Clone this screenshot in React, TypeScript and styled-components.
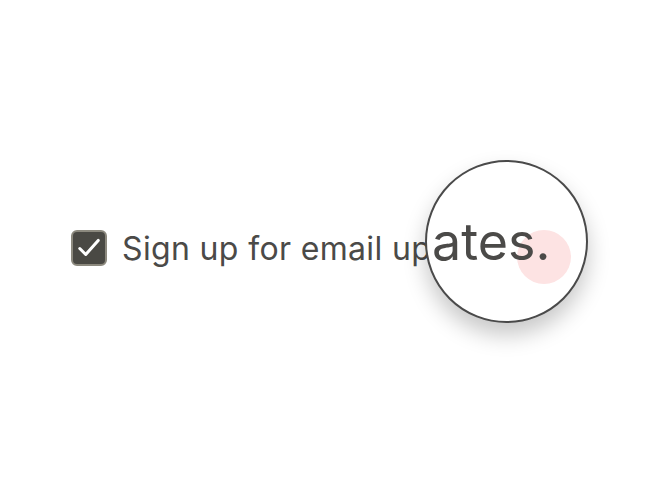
import React from 'react';
import styled, { createGlobalStyle } from 'styled-components';

const Global = createGlobalStyle`
  html, body {
    margin: 0;
    padding: 0;
    background: #ffffff;
  }
  body {
    font-family: Inter, "Noto Sans", sans-serif;
  }
`;

const Stage = styled.div`
  position: relative;
  width: 658px;
  height: 494px;
  overflow: hidden;
  display: flex;
  align-items: center;
  padding-left: 71px;
  box-sizing: border-box;
`;

const Row = styled.label`
  display: flex;
  align-items: center;
  gap: 15px;
  margin-top: 2px;
`;

const Box = styled.span`
  width: 36px;
  height: 36px;
  box-sizing: border-box;
  border-radius: 6px;
  background: #4a4944;
  border: 2px solid #8c897e;
  display: flex;
  align-items: center;
  justify-content: center;
`;

const Label = styled.span`
  font-size: 32px;
  color: #4b4a48;
  letter-spacing: 0.35px;
  white-space: nowrap;
`;

const Lens = styled.div`
  position: absolute;
  left: 425px;
  top: 160px;
  width: 163px;
  height: 163px;
  box-sizing: border-box;
  border-radius: 50%;
  border: 2px solid #4a4a4a;
  background: #ffffff;
  overflow: hidden;
  box-shadow: 0 12px 22px rgba(0, 0, 0, 0.22);
`;

const Dot = styled.div`
  position: absolute;
  left: 90px;
  top: 68px;
  width: 54px;
  height: 54px;
  border-radius: 50%;
  background: #fde3e3;
`;

const Zoomed = styled.span`
  position: absolute;
  left: 5px;
  top: 54px;
  font-size: 52px;
  line-height: 1;
  color: #4b4a48;
  white-space: nowrap;
`;

export default function App() {
  return (
    <>
      <Global />
      <Stage>
        <Row>
          <Box>
            <svg width="26" height="26" viewBox="0 0 24 24" fill="none">
              <path d="M3.5 12.5l5.5 5.5L20.5 5" stroke="#ffffff" strokeWidth="2.8" strokeLinecap="round" strokeLinejoin="round" />
            </svg>
          </Box>
          <Label>Sign up for email updates.</Label>
        </Row>
        <Lens>
          <Dot />
          <Zoomed>ates.</Zoomed>
        </Lens>
      </Stage>
    </>
  );
}
